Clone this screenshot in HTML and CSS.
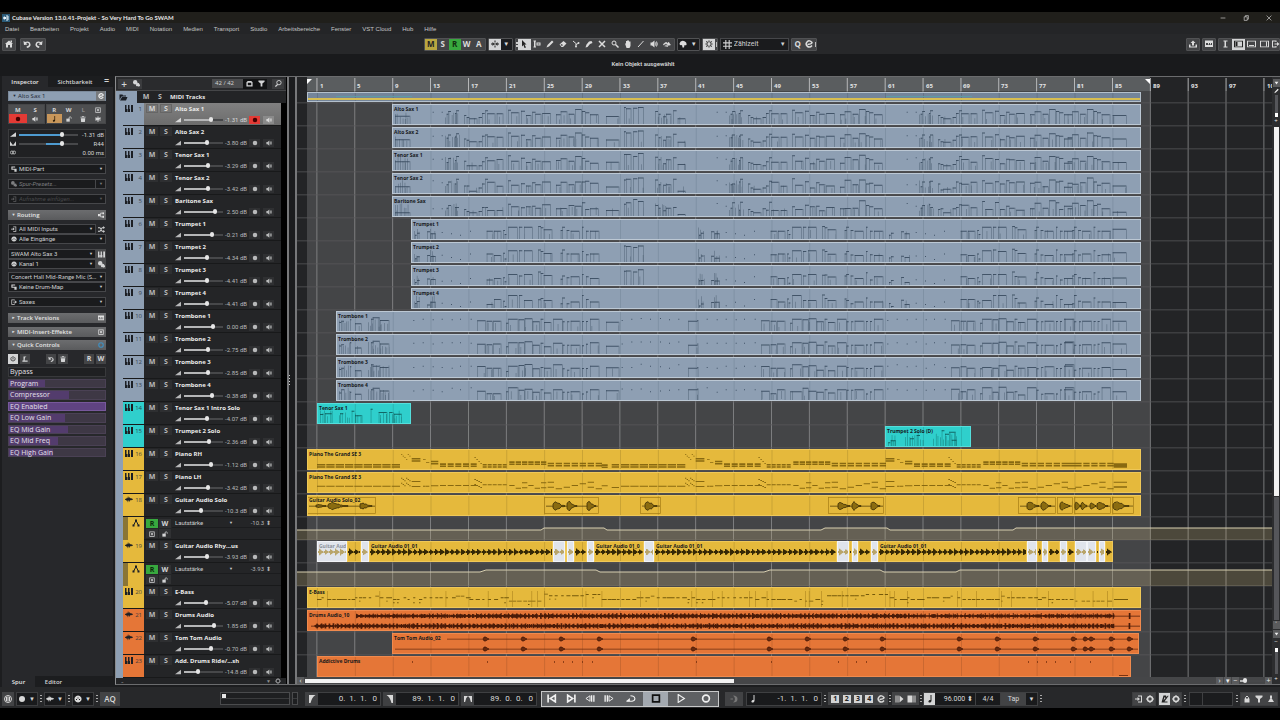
FILE: index.html
```html
<!DOCTYPE html>
<html lang="de">
<head>
<meta charset="utf-8">
<title>Cubase Version 13.0.41-Projekt - So Very Hard To Go SWAM</title>
<link rel="stylesheet" href="styles.css">
</head>
<body>
<svg class="defs" aria-hidden="true">
  <symbol id="i-keys" viewBox="0 0 16 14"><path d="M0 0h3v8h1v6H0zM6 0h3v8h1v6H5V8h1zM12 0h4v14h-4V8h0z"/></symbol>
  <symbol id="i-wave" viewBox="0 0 16 14"><path d="M0 6l3-1 1-2 1 2 1-5 2 5 1-3 2 3 1-1 1 1 3 1v1l-3 1-1 1-2-1-1 4-2-4-1 5-2-5-1 2-1-2-3-1z"/></symbol>
  <symbol id="i-auto" viewBox="0 0 16 16"><path d="M3 13L8 3l5 10" fill="none" stroke="currentColor" stroke-width="2"/><path d="M1 11h4v4H1zM6 1h4v4H6zM11 11h4v4h-4z"/></symbol>
  <symbol id="i-spk" viewBox="0 0 16 16"><path d="M1 5h3l5-4v14l-5-4H1z"/><path d="M11 5q2 3 0 6M13 3q3 5 0 10" fill="none" stroke="currentColor" stroke-width="2"/></symbol>
  <symbol id="i-dot" viewBox="0 0 16 16"><circle cx="8" cy="8" r="6"/></symbol>
  <symbol id="i-down" viewBox="0 0 16 16"><path d="M2 4h12L8 13z"/></symbol>
  <symbol id="i-level" viewBox="0 0 16 12"><path d="M0 12L16 0v12z"/></symbol>
  <symbol id="i-pan" viewBox="0 0 16 12"><path d="M0 0l7 9 2 0 7-9v12H0z"/></symbol>
  <symbol id="i-delay" viewBox="0 0 16 12"><circle cx="5" cy="6" r="4" fill="none" stroke="currentColor" stroke-width="2"/><circle cx="11" cy="6" r="4" fill="none" stroke="currentColor" stroke-width="2"/></symbol>
  <symbol id="i-home" viewBox="0 0 16 16"><path d="M8 1l8 7h-2v7h-4v-5H6v5H2V8H0z"/><path d="M11 1h3v4h-3z"/></symbol>
  <symbol id="i-undo" viewBox="0 0 16 16"><path d="M1 2l1 8 7-1-3-3q6-2 6 3 0 3-5 4l1 3q8-2 7-8Q13 1 4 4z"/></symbol>
  <symbol id="i-redo" viewBox="0 0 16 16"><path d="M15 2l-1 8-7-1 3-3Q4 4 4 9q0 3 5 4l-1 3Q0 14 1 8 3 1 12 4z"/></symbol>
  <symbol id="i-autoscroll" viewBox="0 0 16 16"><path d="M7 1h2v4H7zM7 11h2v4H7zM0 7h3V4l4 4-4 4V9H0zM16 7h-3V4L9 8l4 4V9h3zM6 7h4v2H6z"/></symbol>
  <symbol id="i-arrow" viewBox="0 0 16 16"><path d="M4 0l9 9H9l3 6-3 1-2-6-3 3z"/></symbol>
  <symbol id="i-range" viewBox="0 0 16 16"><path d="M1 1h5v2H5v10h1v2H1v-2h1V3H1zM7 5h8v6H7zM9 7v2h4V7z" fill-rule="evenodd"/></symbol>
  <symbol id="i-pen" viewBox="0 0 16 16"><path d="M1 15l2-5L12 1l3 3-9 9z"/></symbol>
  <symbol id="i-eraser" viewBox="0 0 16 16"><path d="M1 9l8-7 6 5-7 7H5zM5 8l-2 2 3 2 2-2z" fill-rule="evenodd"/></symbol>
  <symbol id="i-cut" viewBox="0 0 16 16"><path d="M2 2l7 6M14 6l-6 3M8 8v4" fill="none" stroke="currentColor" stroke-width="2"/><circle cx="8" cy="13" r="2"/><circle cx="13" cy="6" r="2"/></symbol>
  <symbol id="i-glue" viewBox="0 0 16 16"><path d="M1 15l2-6 5-6 5-1 2 4-5 2-5 6z"/></symbol>
  <symbol id="i-x" viewBox="0 0 16 16"><path d="M2 2l12 12M14 2L2 14" fill="none" stroke="currentColor" stroke-width="3"/></symbol>
  <symbol id="i-lens" viewBox="0 0 16 16"><circle cx="6" cy="6" r="4" fill="none" stroke="currentColor" stroke-width="2"/><path d="M9 9l6 6" stroke="currentColor" stroke-width="3"/></symbol>
  <symbol id="i-find" viewBox="0 0 16 16"><circle cx="9" cy="6" r="5" fill="none" stroke="currentColor" stroke-width="2"/><path d="M6 10l-5 5" stroke="currentColor" stroke-width="3"/></symbol>
  <symbol id="i-hand" viewBox="0 0 16 16"><path d="M2 7h2V2h2v4V1h2v5V1h2v5V3h3v9l-2 4H5z"/></symbol>
  <symbol id="i-line" viewBox="0 0 16 16"><path d="M2 14L13 2" stroke="currentColor" stroke-width="2"/></symbol>
  <symbol id="i-warp" viewBox="0 0 16 16"><path d="M1 8q6-6 8-1l2-3 4 6-7 1 1-2q-3-3-8 1zM3 12q5-3 7 2" stroke="currentColor" stroke-width="1"/></symbol>
  <symbol id="i-palette" viewBox="0 0 16 16"><path d="M1 7Q3 0 10 2q6 2 5 8-3 1-4 0l-1 5H7l-1-5Q1 12 1 7z"/></symbol>
  <symbol id="i-midi" viewBox="0 0 16 16"><path d="M8 1a7 7 0 1 0 .1 0zM4 8h2v2H4zM7 5h2v2H7zM10 8h2v2h-2z" fill-rule="evenodd"/></symbol>
  <symbol id="i-snap" viewBox="0 0 16 16"><path d="M7 1h2v4H7zM7 11h2v4H7zM1 7h4v2H1zM11 7h4v2h-4zM2 3l2-1 2 4-1 1zM14 3l-2-1-2 4 1 1zM2 13l2 1 2-4-1-1zM14 13l-2 1-2-4 1-1z"/></symbol>
  <symbol id="i-grid" viewBox="0 0 16 16"><path d="M5 0v16M11 0v16M0 5h16M0 11h16" fill="none" stroke="currentColor" stroke-width="2"/></symbol>
  <symbol id="i-share" viewBox="0 0 16 16"><path d="M8 1l5 5h-3v5H6V6H3zM0 9h3v4h10V9h3v6H0z"/></symbol>
  <symbol id="i-user" viewBox="0 0 16 16"><path d="M6 1h4v5H6zM7 6h2l5 8H2z"/></symbol>
  <symbol id="i-mixer" viewBox="0 0 16 16"><path d="M0 1h16v13H0zM2 6v6h12V6h-2v3h-2V6H8v3H6V6z" fill-rule="evenodd"/><path d="M2 10h12v2H2z"/></symbol>
  <symbol id="i-zone" viewBox="0 0 18 14"><path d="M0 0h18v14H0zM2 2v10h14V2z" fill-rule="evenodd"/></symbol>
  <symbol id="i-folder" viewBox="0 0 16 14"><path d="M0 1h6l1 2h6v2H4L0 12zM5 6h11l-3 7H1z"/></symbol>
  <symbol id="i-shapes" viewBox="0 0 16 16"><circle cx="5" cy="5" r="5"/><path d="M7 7h7v7H7z"/><circle cx="13" cy="12" r="3"/></symbol>
  <symbol id="i-lock" viewBox="0 0 16 16"><path d="M3 7h10v8H3z"/><path d="M5 8V5q3-6 6 0v3" fill="none" stroke="currentColor" stroke-width="2"/></symbol>
  <symbol id="i-ulock" viewBox="0 0 16 16"><path d="M1 7h9v8H1z"/><path d="M8 8V4q3-4 6 0v3" fill="none" stroke="currentColor" stroke-width="2"/></symbol>
  <symbol id="i-filter" viewBox="0 0 16 16"><path d="M1 1h14v3l-5 4v7H6V8L1 4z"/></symbol>
  <symbol id="i-cam" viewBox="0 0 16 16"><path d="M1 5l3-3h8l3 3v10H1zM4 6v6h8V6z" fill-rule="evenodd"/></symbol>
  <symbol id="i-gear" viewBox="0 0 16 16"><circle cx="8" cy="8" r="5" fill="none" stroke="currentColor" stroke-width="3"/><path d="M7 0h2v3H7zM7 13h2v3H7zM0 7h3v2H0zM13 7h3v2h-3z"/></symbol>
  <symbol id="i-note" viewBox="0 0 16 16"><path d="M9 0h2v12q-1 4-5 3-3-2 1-5h2z"/></symbol>
  <symbol id="i-bars" viewBox="0 0 16 16"><path d="M1 1h10v3H4v3h11v8H9v-5H1z"/></symbol>
  <symbol id="i-in" viewBox="0 0 16 16"><path d="M6 1h8v14H6v-2h6V3H6zM0 7h5V4l5 4-5 4V9H0z"/></symbol>
  <symbol id="i-out" viewBox="0 0 16 16"><path d="M1 1h9v3H8V3H3v10h5v-1h2v3H1zM6 7h5V4l5 4-5 4V9H6z"/></symbol>
  <symbol id="i-mix" viewBox="0 0 16 16"><path d="M0 3h5l5 8h2V9l4 3-4 4v-3H9L4 5H0zM0 11h4l5-8h3V0l4 4-4 3V5h-2l-5 8H0z"/></symbol>
  <symbol id="i-route" viewBox="0 0 16 16"><path d="M3 8h4V3h8M7 8v5h8" fill="none" stroke="currentColor" stroke-width="2"/><path d="M0 5h5v6H0zM12 1h4v5h-4zM12 10h4v5h-4z"/></symbol>
  <symbol id="i-power" viewBox="0 0 16 16"><path d="M4 3q-3 3-1 8 5 5 10 0 2-5-1-8" fill="none" stroke="currentColor" stroke-width="2"/><path d="M7 0h2v9H7z"/></symbol>
  <symbol id="i-learn" viewBox="0 0 16 16"><path d="M4 1h5l3 1-4 2-1 8h8v3H1v-3h3z"/></symbol>
  <symbol id="i-trash" viewBox="0 0 16 16"><path d="M1 2h5V0h4v2h5v2H1zM2 6h12l-1 10H3z"/></symbol>
  <symbol id="i-star" viewBox="0 0 16 16"><path d="M8 1v14M1 5l14 6M15 5L1 11" stroke="currentColor" stroke-width="3"/></symbol>
  <symbol id="i-box" viewBox="0 0 16 16"><path d="M1 1h14v14H1zM3 3v10h10V3z" fill-rule="evenodd"/><path d="M6 5h4v6H6z"/></symbol>
  <symbol id="i-e" viewBox="0 0 16 16"><path d="M14 11Q10 16 5 13 0 8 4 4q5-5 10 1 0 3-9 4" fill="none" stroke="currentColor" stroke-width="3"/></symbol>
  <symbol id="i-rings" viewBox="0 0 16 16"><circle cx="8" cy="8" r="7" fill="none" stroke="currentColor" stroke-width="2"/><path d="M5 4v8M8 3v10M11 4v8" stroke="currentColor" stroke-width="2"/></symbol>
  <symbol id="i-locl" viewBox="0 0 16 16"><path d="M2 0h13Q8 4 5 16H2z"/></symbol>
  <symbol id="i-locr" viewBox="0 0 16 16"><path d="M14 0H1q7 4 10 16h3z"/></symbol>
  <symbol id="i-loc2" viewBox="0 0 22 16"><path d="M0 0h11Q4 5 3 16H0zM22 0H11q7 5 8 16h3z"/></symbol>
  <symbol id="i-tostart" viewBox="0 0 18 16"><path d="M2 1v14M15 2L6 8l9 6z" fill="none" stroke="currentColor" stroke-width="3"/></symbol>
  <symbol id="i-toend" viewBox="0 0 18 16"><path d="M16 1v14M3 2l9 6-9 6z" fill="none" stroke="currentColor" stroke-width="3"/></symbol>
  <symbol id="i-rew" viewBox="0 0 22 16"><path d="M11 2L2 8l9 6z" fill="none" stroke="currentColor" stroke-width="2"/><path d="M13 1h3v14h-3zM18 1h3v14h-3z"/></symbol>
  <symbol id="i-fwd" viewBox="0 0 22 16"><path d="M11 2l9 6-9 6z" fill="none" stroke="currentColor" stroke-width="2"/><path d="M1 1h3v14H1zM6 1h3v14H6z"/></symbol>
  <symbol id="i-cycle" viewBox="0 0 18 16"><path d="M1 13h10q5-1 5-5-1-5-8-5" fill="none" stroke="currentColor" stroke-width="2"/><path d="M0 13l7-6v6z"/></symbol>
  <symbol id="i-stop" viewBox="0 0 16 16"><path d="M2 2h12v12H2z" fill="none" stroke="currentColor" stroke-width="3"/></symbol>
  <symbol id="i-play" viewBox="0 0 16 16"><path d="M3 1l11 7-11 7z" fill="none" stroke="currentColor" stroke-width="2"/></symbol>
  <symbol id="i-rec" viewBox="0 0 16 16"><circle cx="8" cy="8" r="6" fill="none" stroke="currentColor" stroke-width="3"/></symbol>
  <symbol id="i-moon" viewBox="0 0 16 16"><path d="M6 1q9 0 9 7t-9 7q4-3 4-7T6 1zM1 7h5v2H1z"/></symbol>
  <symbol id="i-metro" viewBox="0 0 16 16"><path d="M5 1h5l1 3 3-3 1 1-8 11h6v2H1zM7 4L5 11l4-5z" fill-rule="evenodd"/></symbol>
  <symbol id="i-logo" viewBox="0 0 16 16"><rect width="16" height="16" fill="#2a5a78"/><path d="M2 8l3-5v3h3v4H5v3zM9 2h2v3h3v2h-3v2h3v2h-3v3H9z" fill="#e8f2f8"/></symbol>
</svg>

<div class="app">
  <header class="titlebar">
    <svg class="logo"><use href="#i-logo"/></svg>
    <span class="title">Cubase Version 13.0.41-Projekt - So Very Hard To Go SWAM</span>
    <button class="win" aria-label="Minimieren"><svg viewBox="0 0 10 10"><path d="M1 5h8" stroke="currentColor"/></svg></button>
    <button class="win" aria-label="Verkleinern"><svg viewBox="0 0 10 10"><path d="M2 3h5v6H2zM4 3V1h5v6H7" fill="none" stroke="currentColor"/></svg></button>
    <button class="win" aria-label="Schließen"><svg viewBox="0 0 10 10"><path d="M1 1l8 8M9 1L1 9" stroke="currentColor"/></svg></button>
  </header>
  <nav class="menu">
    <a href="#">Datei</a><a href="#">Bearbeiten</a><a href="#">Projekt</a><a href="#">Audio</a><a href="#">MIDI</a><a href="#">Notation</a><a href="#">Medien</a><a href="#">Transport</a><a href="#">Studio</a><a href="#">Arbeitsbereiche</a><a href="#">Fenster</a><a href="#">VST Cloud</a><a href="#">Hub</a><a href="#">Hilfe</a>
  </nav>

  <div class="toolbar">
    <div class="tgroup">
      <div class="grp"><button aria-label="Hub"><svg><use href="#i-home"/></svg></button></div>
      <div class="grp"><button aria-label="Rückgängig"><svg><use href="#i-undo"/></svg></button><button aria-label="Wiederherstellen"><svg><use href="#i-redo"/></svg></button></div>
    </div>
    <div class="tgroup tight">
      <div class="grp letters"><button class="mute">M</button><button>S</button><button class="read">R</button><button>W</button><button>A</button></div>
      <div class="grp dark"><button class="lit" aria-label="Auto-Scroll"><svg><use href="#i-autoscroll"/></svg></button><button class="arr" aria-label="Optionen">▼</button></div>
      <div class="grp tools"><i class="grip"></i><button class="lit" aria-label="Auswahl"><svg><use href="#i-arrow"/></svg></button><button aria-label="Bereich"><svg><use href="#i-range"/></svg></button><button aria-label="Stift"><svg><use href="#i-pen"/></svg></button><button aria-label="Löschen"><svg><use href="#i-eraser"/></svg></button><button aria-label="Trennen"><svg><use href="#i-cut"/></svg></button><button aria-label="Kleben"><svg><use href="#i-glue"/></svg></button><button aria-label="Stummschalten"><svg><use href="#i-x"/></svg></button><button aria-label="Zoom"><svg><use href="#i-lens"/></svg></button><button aria-label="Comp"><svg><use href="#i-hand"/></svg></button><button aria-label="Linie"><svg><use href="#i-line"/></svg></button><button aria-label="Wiedergabe"><svg><use href="#i-spk"/></svg></button><button aria-label="Warp"><svg><use href="#i-warp"/></svg></button></div>
      <div class="grp dark pal"><button aria-label="Farbe"><svg><use href="#i-palette"/></svg></button><button class="arr" aria-label="Farbmenü">▼</button></div>
      <div class="grp"><button class="lit" aria-label="Raster"><svg><use href="#i-snap"/></svg></button><i class="bar"></i></div>
      <label class="drop beat"><svg><use href="#i-grid"/></svg><select aria-label="Rastertyp"><option>Zählzeit</option></select></label>
      <div class="grp"><button>Q</button><button class="thin" aria-label="Quantisierungsfeld"><svg><use href="#i-e"/></svg></button><i class="bar"></i></div>
    </div>
    <div class="tgroup end">
      <div class="grp"><button aria-label="Export"><svg><use href="#i-share"/></svg></button></div>
      <div class="grp"><button aria-label="MixConsole"><svg><use href="#i-mixer"/></svg></button></div>
      <div class="grp zones"><button aria-label="Info"><svg viewBox="0 0 18 14"><path d="M5 0h8v2h-3v10h3v2H5v-2h2V2H5z"/></svg></button><button class="lit" aria-label="Linke Zone"><svg viewBox="0 0 18 14"><use href="#i-zone"/><path d="M3 3h4v8H3z"/></svg></button><button aria-label="Untere Zone"><svg viewBox="0 0 18 14"><use href="#i-zone"/><path d="M4 9h10v2H4z"/></svg></button><button aria-label="Rechte Zone"><svg viewBox="0 0 18 14"><use href="#i-zone"/><path d="M12 2h2v10h-2z"/></svg></button><button class="arr" aria-label="Einrichten"><svg><use href="#i-out"/></svg></button></div>
    </div>
  </div>

  <div class="infoline">Kein Objekt ausgewählt</div>

  <main class="work">
    <aside class="inspector">
      <div class="tabs"><button class="on">Inspector</button><button>Sichtbarkeit</button><span class="eq">=</span></div>
      <div class="panel">
        <div class="head track"><span class="tri">▼</span><span class="grow">Alto Sax 1</span><button class="edit" aria-label="Bearbeiten"><svg><use href="#i-e"/></svg></button></div>
        <div class="pads">
          <div class="pad two"><button>M</button><button>S</button><button class="red" aria-label="Aufnahme"><svg><use href="#i-dot"/></svg></button><button aria-label="Monitor"><svg><use href="#i-spk"/></svg></button></div>
          <div class="pad four"><button>R</button><button>W</button><button class="off">L</button><button aria-label="Lanes"><svg><use href="#i-box"/></svg></button><button class="tan" aria-label="Zeitbasis"><svg><use href="#i-note"/></svg></button><button aria-label="Sperren"><svg><use href="#i-ulock"/></svg></button><button aria-label="Spuren"><svg><use href="#i-trash"/></svg></button><button aria-label="Einfrieren"><svg><use href="#i-star"/></svg></button></div>
        </div>
        <div class="faders">
          <label><svg><use href="#i-level"/></svg><input type="range" class="rng blue" value="75" style="--v:75%"><output>-1.31 dB</output></label>
          <label><svg><use href="#i-pan"/></svg><input type="range" class="rng pan" value="74" style="--v:74%"><output>R44</output></label>
          <label><svg><use href="#i-delay"/></svg><span></span><output>0.00 ms</output></label>
        </div>
        <label class="drop"><svg><use href="#i-bars"/></svg><select><option>MIDI-Part</option></select></label>
        <label class="drop dim cut"><svg><use href="#i-shapes"/></svg><select><option>Spur-Presets...</option></select></label>
        <label class="drop dim off"><svg><use href="#i-in"/></svg><select disabled><option>Aufnahme einfügen...</option></select></label>
        <div class="head"><span class="tri">▼</span><span class="grow">Routing</span><svg><use href="#i-route"/></svg></div>
        <div class="stack s1">
          <div class="pair"><label class="drop"><svg><use href="#i-in"/></svg><select><option>All MIDI Inputs</option></select></label><button class="sq" aria-label="Mischen"><svg><use href="#i-mix"/></svg></button></div>
          <label class="drop"><svg><use href="#i-midi"/></svg><select><option>Alle Eingänge</option></select></label>
        </div>
        <div class="stack s2">
          <div class="pair"><label class="drop"><select aria-label="Ausgang"><option>SWAM Alto Sax 3</option></select></label><button class="sq fill" aria-label="Instrument"><svg><use href="#i-keys"/></svg></button></div>
          <div class="pair"><label class="drop"><svg><use href="#i-midi"/></svg><select><option>Kanal 1</option></select></label><button class="sq fill" aria-label="Kanal"><svg><use href="#i-shapes"/></svg></button></div>
        </div>
        <div class="stack s3">
          <label class="drop long"><select aria-label="Programm"><option>Concert Hall Mid-Range Mic (Sym...</option></select></label>
          <label class="drop"><svg><use href="#i-bars"/></svg><select><option>Keine Drum-Map</option></select></label>
        </div>
        <label class="drop last"><svg><use href="#i-out"/></svg><select><option>Saxes</option></select></label>
        <div class="head"><span class="tri">►</span><span class="grow">Track Versions</span><svg><use href="#i-mixer"/></svg></div>
        <div class="head near"><span class="tri">►</span><span class="grow">MIDI-Insert-Effekte</span><svg><use href="#i-box"/></svg></div>
        <div class="head near"><span class="tri">▼</span><span class="grow">Quick Controls</span><svg class="cy"><use href="#i-rec"/></svg></div>
        <div class="qcbar"><button class="lit" aria-label="An"><svg><use href="#i-power"/></svg></button><button aria-label="Lernen"><svg><use href="#i-learn"/></svg></button><i></i><button aria-label="Zurück"><svg><use href="#i-undo"/></svg></button><button aria-label="Löschen"><svg><use href="#i-trash"/></svg></button><i></i><button class="rw">R</button><button class="rw">W</button></div>
        <ul class="qc">
          <li class="none" style="--w:0%">Bypass</li><li style="--w:37%">Program</li><li style="--w:63%">Compressor</li><li class="all" style="--w:100%">EQ Enabled</li><li style="--w:58%">EQ Low Gain</li><li style="--w:61%">EQ Mid Gain</li><li style="--w:51%">EQ Mid Freq</li><li style="--w:46%">EQ High Gain</li>
        </ul>
      </div>
      <div class="tabs foot"><button class="on">Spur</button><button>Editor</button></div>
    </aside>

    <section class="project">
      <div class="tracklist">
        <div class="tlhead"><button aria-label="Spur hinzufügen">+</button><button aria-label="Preset"><svg><use href="#i-shapes"/></svg></button><span class="count">42 / 42</span><button class="k" aria-label="Agenten"><svg><use href="#i-cam"/></svg></button><button class="k" aria-label="Filter"><svg><use href="#i-filter"/></svg></button><button class="find" aria-label="Suchen"><svg><use href="#i-find"/></svg></button></div>
        <div class="folder"><svg><use href="#i-folder"/></svg><span class="ms"><button>M</button><button>S</button></span><b>MIDI Tracks</b></div>
        <div class="tracks" id="tracks"></div>
        <div class="tlfoot"><span>-</span><span>▼</span><svg><use href="#i-gear"/></svg></div>
      </div>
      <div class="split"><i></i></div>
      <div class="arrange">
        <div class="canvas" id="canvas"></div>
        <div class="hscroll"><span class="cell">‹</span><span class="thumb"></span><span class="rest"></span><span class="cell">›</span><span class="cell">▾</span><span class="cell">−</span><input type="range" class="rng mini" aria-label="Zoom horizontal" value="15" style="--v:15%"><span class="cell">+</span></div>
      </div>
      <div class="vscroll"><svg class="box"><use href="#i-down"/></svg><svg><use href="#i-pen"/></svg><i class="track short"></i><span>+</span><i class="track white"></i><i class="track fill"></i><span class="cell">˅</span><svg class="box"><use href="#i-down"/></svg><span>−</span><i class="track zoom"></i><span>+</span></div>
    </section>
  </main>

  <footer class="transport">
    <button class="t1" aria-label="Constrain"><svg><use href="#i-rings"/></svg></button>
    <div class="tg"><button aria-label="Aufnahmemodus"><svg><use href="#i-dot"/></svg></button><button class="arr" aria-label="Menü">▼</button></div><i class="dots"></i>
    <div class="tg"><button aria-label="Audio"><svg><use href="#i-wave"/></svg></button><button class="arr" aria-label="Menü">▼</button></div><i class="dots"></i>
    <div class="tg"><button aria-label="MIDI"><svg><use href="#i-midi"/></svg></button><button class="arr" aria-label="Menü">▼</button></div><i class="dots"></i>
    <button class="t1 aq">AQ</button>
    <div class="meter"><i></i></div><div class="meter small"></div>
    <div class="loc"><svg><use href="#i-locl"/></svg><span>0.&nbsp; 1.&nbsp; 1.&nbsp; &nbsp;0</span></div>
    <div class="loc"><svg><use href="#i-locr"/></svg><span>89.&nbsp; 1.&nbsp; 1.&nbsp; &nbsp;0</span></div>
    <div class="loc last"><svg><use href="#i-loc2"/></svg><span>89.&nbsp; 0.&nbsp; 0.&nbsp; &nbsp;0</span></div>
    <div class="play"><button aria-label="Anfang"><svg><use href="#i-tostart"/></svg></button><button aria-label="Ende"><svg><use href="#i-toend"/></svg></button><button aria-label="Zurückspulen"><svg><use href="#i-rew"/></svg></button><button aria-label="Vorspulen"><svg><use href="#i-fwd"/></svg></button><button class="w" aria-label="Cycle"><svg><use href="#i-cycle"/></svg></button><button class="stop" aria-label="Stopp"><svg><use href="#i-stop"/></svg></button><button class="w" aria-label="Start"><svg><use href="#i-play"/></svg></button><button class="w" aria-label="Aufnahme"><svg><use href="#i-rec"/></svg></button></div>
    <button class="t1 moon" aria-label="Pre-Roll"><svg><use href="#i-moon"/></svg></button>
    <div class="loc pos"><svg><use href="#i-note"/></svg><span>-1.&nbsp; 1.&nbsp; 1.&nbsp; &nbsp;0</span></div><i class="dots"></i>
    <div class="marks"><b>1</b><b>2</b><b>3</b><b>4</b><svg><use href="#i-e"/></svg></div><i class="dots"></i>
    <div class="marks roll"><svg viewBox="0 0 16 16"><path d="M0 1h2v14H0zM4 1h2v14H4zM8 1l8 7-8 7z"/></svg><svg viewBox="0 0 16 16"><path d="M0 1h9v14H0zM10 1h2v14h-2zM14 1h2v14h-2z"/></svg></div><i class="dots"></i>
    <div class="tempo"><button class="lit" aria-label="Tempo"><svg><use href="#i-note"/></svg></button><span class="bpm">96.000 <small>⬍</small></span><span>4/4</span><button class="tap">Tap</button><button class="arr" aria-label="Menü">▼</button></div><i class="dots"></i>
    <span class="gap"></span>
    <div class="tg grey"><button aria-label="Punch"><svg><use href="#i-in"/></svg></button><button aria-label="Einstellungen"><svg><use href="#i-gear"/></svg></button></div>
    <div class="tg grey"><button class="lit" aria-label="Metronom"><svg><use href="#i-metro"/></svg></button><button aria-label="Einstellungen"><svg><use href="#i-gear"/></svg></button></div><i class="dots"></i>
    <div class="vu"></div><i class="dots"></i>
    <div class="tg grey"><button aria-label="Sperren"><svg><use href="#i-lock"/></svg></button><button aria-label="Filter"><svg><use href="#i-filter"/></svg></button><button aria-label="Nutzer"><svg><use href="#i-user"/></svg></button></div>
  </footer>
</div>
<script src="app.js"></script>
</body>
</html>
```

FILE: styles.css
```css
* { box-sizing: border-box; }
html, body { height: 100%; }
body {
  margin: 0;
  background: #000;
  color: #d4d5d6;
  font: 6px/8px "Open Sans", "Noto Sans", sans-serif;
  overflow: hidden;
}
button, select, input { font: inherit; color: inherit; border: 0; padding: 0; margin: 0; background: none; }
button { display: flex; align-items: center; justify-content: center; line-height: 8px; }
svg { fill: currentColor; flex: none; width: 8px; height: 8px; }
.defs { position: absolute; width: 0; height: 0; }
a { color: inherit; text-decoration: none; }
.app { display: flex; flex-direction: column; height: 100vh; padding: 12px 0; }

.titlebar { display: flex; align-items: center; height: 11px; background: #201f1b; padding-left: 2px; color: #e6e6e6; }
.logo { width: 8px; height: 8px; margin-right: 2px; }
.title { flex: 1; font: bold 6px/10px Lato, sans-serif; }
.win { width: 23px; }
.win svg { width: 6px; height: 6px; }
.menu { display: flex; gap: 11px; height: 11px; align-items: center; padding: 0 5px; background: #242527; font-family: "Liberation Sans", sans-serif; color: #c4c5c6; }
.toolbar { display: grid; grid-template-columns: 33% auto 1fr; height: 20px; background: #27282a; align-items: center; padding-left: 2px; }
.tgroup { display: flex; gap: 4px; align-items: center; }
.tgroup.tight { gap: 2px; }
.tgroup.end { justify-content: flex-end; gap: 2px; }
.grp { display: flex; height: 13px; background: #434446; border: 1px solid #515254; border-radius: 1px; align-items: stretch; color: #dcdcdc; }
.grp button { width: 12px; font: bold 8px/10px "Open Sans", sans-serif; }
.grp.tools button { width: 13px; height: 11px; }
.grp.dark { background: #1b1c1e; }
.grp .arr, .tg .arr, .tempo .arr { font-size: 6px; width: 11px; }
.grp.pal button { width: 11px; }
.grp.pal .arr { width: 10px; }
.grp .thin { width: 10px; }
.grp .mute { background: #b9a740; color: #222; }
.grp .read { background: #38a83e; color: #12300f; }
.grp .lit, .lit { background: #d3d4d5; color: #222; }
.grip { width: 2px; align-self: center; height: 5px; background: repeating-linear-gradient(#ccc 0 2px, transparent 2px 3px); }
.bar { width: 1px; height: 5px; background: #bbb; align-self: center; margin-left: 1px; }
.drop { display: flex; align-items: center; height: 10px; min-width: 0; background: #1a1b1d; border: 1px solid #46474a; padding: 0 2px; gap: 2px; position: relative; color: #cfd0d1; font-family: Roboto, sans-serif; }
.drop svg { width: 6px; height: 6px; }
.drop select { appearance: none; flex: 1; min-width: 0; width: 100%; height: 8px; line-height: 8px; padding-right: 5px; text-overflow: ellipsis; outline: none; }
.drop::after { content: "▼"; position: absolute; right: 2px; font-size: 4px; }
.drop.cut { background: linear-gradient(90deg, transparent calc(100% - 10px), #46474a calc(100% - 10px) calc(100% - 9px), transparent calc(100% - 9px)) #1a1b1d; }
.drop.long { font-family: Lato, sans-serif; }
.beat { width: 69px; height: 13px; font-size: 7px; }
.beat svg { width: 9px; height: 9px; }
.beat::after { font-size: 6px; }
.zones svg { width: 9px; height: 8px; }
.zones button { width: 13px; }
.grp.zones .arr { width: 8px; }
.infoline { height: 22px; background: #191a1c; text-align: center; line-height: 20px; padding-left: 6px; font-family: Roboto, sans-serif; font-weight: 600; }

.work { display: flex; flex: 1; min-height: 0; background: #1c1d1f; }
.inspector { width: 113px; flex: none; display: flex; flex-direction: column; margin-right: 2px; }
.tabs { display: flex; height: 11px; padding-left: 2px; font-weight: 600; font-size: 6px; }
.tabs button { width: 46px; }
.tabs button + button { width: 54px; }
.tabs .on { background: #27282b; color: #e6e6e6; }
.tabs .eq { font-size: 9px; margin-left: 2px; line-height: 10px; }
.tabs.foot button { width: 37px; }
.tabs.foot .on { width: 33px; }
.panel { flex: 1; margin-left: 2px; background: #27282b; padding: 4px 7px 0 6px; display: flex; flex-direction: column; }
.head { display: flex; align-items: center; height: 10px; background: linear-gradient(#6c6d6f, #5a5b5d); color: #e3e3e3; font-weight: 600; padding: 0 2px; margin: 6px 0 4px; flex: none; }
.head.near { margin: 0 0 3px; }
.head svg { width: 6px; height: 6px; }
.head .cy { color: #3f8fc0; }
.head .tri { font-size: 4px; width: 7px; text-align: center; }
.head .grow { flex: 1; }
.head.track { background: #8e9fb3; color: #1c2632; margin: 0 0 3px; padding-right: 0; border: 1px solid #7c8b9c; font-weight: 400; }
.edit { width: 9px; height: 10px; background: #777a7d; color: #eee; }
.pads { display: flex; gap: 1px; margin-bottom: 5px; }
.pad { display: grid; background: #4d4e50; grid-auto-rows: 9px; font-weight: 700; border: 1px solid #454648; }
.pad.two { grid-template-columns: 1fr 1fr; width: 37px; }
.pad.four { grid-template-columns: repeat(4, 1fr); flex: 1; }
.pad svg { width: 6px; height: 6px; }
.pad .red { background: #e33a35; color: #400; }
.pad .tan { background: #c8965a; color: #2a1c08; }
.pad .off { color: #888; }
.faders { border: 1px solid #3c3d3f; background: #202123; padding: 0 1px; margin-bottom: 6px; font-family: Roboto, sans-serif; }
.faders label { display: grid; grid-template-columns: 7px 1fr 24px; gap: 2px; align-items: center; height: 9px; }
.faders svg { width: 6px; height: 5px; }
.faders output { text-align: right; white-space: nowrap; }
.rng { appearance: none; height: 5px; width: 100%; min-width: 0; outline: none; display: block; background: linear-gradient(90deg, #b5b6b7 var(--v), #47484a var(--v)) center / 100% 2px no-repeat; }
.rng::-webkit-slider-thumb { appearance: none; width: 4px; height: 5px; border-radius: 2px; background: #e6e6e6; }
.rng.blue { background-image: linear-gradient(90deg, #4e9bd0 var(--v), #47484a var(--v)); }
.rng.pan { background-image: linear-gradient(90deg, #47484a 46%, #4e9bd0 46% var(--v), #47484a var(--v)); }
.panel > .drop { margin-bottom: 5px; flex: none; }
.panel > .drop.dim { font-style: italic; color: #7d7e80; }
.panel > .drop.off { color: #5c5d5f; margin-bottom: 0; }
.panel > .drop.last { margin-bottom: 0; }
.stack { display: flex; flex-direction: column; margin-bottom: 5px; flex: none; }
.stack.s2 { margin-bottom: 3px; }
.pair { display: flex; }
.pair .drop { flex: 1; }
.sq { width: 10px; height: 10px; }
.sq svg { width: 7px; height: 7px; }
.sq.fill { background: #48494b; }
.qcbar { display: flex; height: 10px; gap: 2px; margin: 1px 0 3px; flex: none; }
.qcbar i { flex: 1; }
.qcbar button { width: 10px; background: #434446; font-weight: 700; font-size: 7px; }
.qcbar .lit { background: #d3d4d5; }
.qcbar svg { width: 6px; height: 6px; }
.qc { list-style: none; margin: 0; padding: 0; display: grid; gap: 2px; height: 90px; grid-template-rows: repeat(8, minmax(0, 1fr)); flex: none; }
.qc li { background: linear-gradient(90deg, #533c6d var(--w), #3e3845 var(--w)); border: 1px solid #4a4154; padding-left: 1px; font: 7px/8px "Open Sans", sans-serif; color: #e4e0ea; }
.qc .none { background: #1f2022; border-color: #38393b; }
.qc .all { background: #5f4382; border-color: #77589b; }

.project { flex: 1; min-width: 0; display: flex; border: solid #6b6c6e; border-width: 1px 0 1px 1px; border-left-color: #8b8c8e; margin-bottom: 2px; background: #232426; }
.tracklist { width: 171px; flex: none; display: flex; flex-direction: column; border-right: 1px solid #000; }
.tlhead { display: flex; height: 14px; flex: none; background: #2a2b2d; align-items: center; padding: 0 2px; border-bottom: 1px solid #454648; }
.tlhead button { width: 12px; height: 10px; background: #3b3c3e; font-size: 10px; font-weight: 600; }
.tlhead svg { width: 7px; height: 7px; }
.tlhead .count { width: 31px; height: 9px; background: #4a4b4d; margin-left: auto; padding-left: 3px; }
.tlhead .k { background: #121314; }
.tlhead .find { margin-left: 5px; }
.folder { display: flex; height: 12px; flex: none; align-items: center; background: linear-gradient(90deg, #8e9fb3 21px, #232426 21px); padding-left: 3px; }
.folder svg { color: #1a1e24; width: 9px; height: 7px; }
.folder b { margin-left: 4px; color: #e6e6e6; }
.folder .ms { margin-left: 12px; }
.ms { display: flex; gap: 2px; height: 9px; width: 26px; }
.ms button { width: 12px; font-weight: 700; font-size: 7px; color: #b9babb; }
.tracks { flex: none; border-left: 7px solid #8e9fb3; border-right: 5px solid #000; }
.trk { display: grid; grid-template-columns: 21px 28px 1fr; height: 23px; border-bottom: 1px solid #18191a; background: #242527; }
.trk.sel { background: linear-gradient(#818181, #6c6c6c); }
.tag { display: flex; justify-content: space-between; align-items: flex-start; padding: 2px 2px; font-size: 6px; color: #2b3340; }
.blue-t .tag { background: #8e9fb3; } .teal-t .tag { background: #2fcfcc; }
.gold-t .tag { background: #e5b93c; } .orng-t .tag { background: #e57637; }
.tag svg { width: 8px; height: 7px; color: #1c1f24; }
.tag span { opacity: .85; }
.trk > .ms { margin: 1px 0 0 2px; }
.trk > .ms button { background: #2e2f31; }
.trk.sel > .ms button { background: #777; color: #d6d6d6; border: 1px solid #666; }
.body { padding-left: 3px; min-width: 0; }
.name { display: block; font: bold 6px/12px "Open Sans", sans-serif; color: #ececec; height: 12px; white-space: nowrap; }
.ctl { display: grid; grid-template-columns: 7px 39px 22px 12px 12px; gap: 2px; align-items: center; height: 9px; color: #b8b9ba; font-family: Roboto, sans-serif; }
.ctl svg { width: 6px; height: 6px; }
.ctl output { text-align: right; white-space: nowrap; }
.ctl button { height: 8px; background: #2f3032; width: 11px; }
.sel .ctl button { background: #8a8a8a; }
.sel .ctl .r { background: #e33a35; color: #400; }
.sel .ctl { color: #d8d8d8; }
.aut .tag { border-left: 5px solid #8a7535; justify-content: center; }
.aut .tag svg { width: 8px; height: 8px; }
.rwbox { display: grid; grid-template-columns: 12px 12px; grid-auto-rows: 9px; gap: 1px; padding: 2px; }
.rwbox .g { background: #38a83e; color: #0d2a0c; }
.rwbox button { background: #303133; font-weight: 700; font-size: 7px; }
.rwbox svg { width: 6px; height: 6px; }
.par { display: grid; grid-template-columns: 60px 1fr 8px; padding: 1px 9px 0 3px; height: 11px; color: #b5b6b7; border-bottom: 1px solid #1b1c1e; align-items: center; font-family: Roboto, sans-serif; }
.par .drop { background: none; border: 0; padding: 0; }
.par output { text-align: right; }
.par span { text-align: center; }
.tlfoot { display: flex; justify-content: flex-end; gap: 4px; flex: 1; min-height: 0; padding: 0 5px; align-items: center; font-size: 5px; color: #8d8e90; }
.tlfoot span:first-child { margin-right: auto; font-size: 8px; }
.tlfoot svg { width: 6px; height: 6px; }
.split { width: 10px; flex: none; background: #1b1c1e; border-left: 2px solid #77787a; border-right: 2px solid #77787a; display: flex; align-items: center; }
.split i { height: 12px; width: 1px; background: repeating-linear-gradient(#ccc 0 1px, transparent 1px 3px); }
.arrange { flex: 1; min-width: 0; display: flex; flex-direction: column; }
.canvas { position: relative; flex: 1; min-height: 0; overflow: hidden; background: #232426; }
.canvas > svg { position: absolute; left: 0; top: 0; width: 100%; height: 100%; }
.ruler { position: relative; height: 14px; }
.ruler span { position: absolute; top: 5px; font: bold 6px/8px "Open Sans", sans-serif; color: #e2e3e4; }
.lane { position: relative; height: 23px; }
.lane.first { height: 12px; }
.clip { position: absolute; top: 1px; bottom: 1px; overflow: hidden; border: 1px solid; color: #17191c; }
.clip svg { position: absolute; left: 0; top: 0; width: 100%; height: 100%; }
.clip span { position: absolute; left: 1px; top: 0; font: bold 5px/8px "Open Sans", sans-serif; white-space: nowrap; }
.clip.blue { background: #8e9fb3; border-color: #bcc8d4; }
.clip.teal { background: #2fcfcc; border-color: #55dedb; }
.clip.gold { background: #e5b93c; border-color: #efc858; }
.clip.orange { background: #e57637; border-color: #f08a4e; }
.clip.white { background: #e0e4ec; border-color: #f2f4f8; color: #8b909a; }
.clip.sum { background: #74859a; border-color: #b4c0cc; }
.hscroll { display: flex; height: 7px; background: #454648; align-items: center; flex: none; font-size: 7px; gap: 1px; }
.hscroll .thumb { width: 44%; height: 4px; background: #f2f2f2; }
.hscroll .rest { flex: 1; }
.cell { width: 7px; text-align: center; line-height: 7px; background: #5a5b5d; color: #eee; }
.rng.mini { width: 24px; }
.vscroll { width: 8px; flex: none; background: #2c2d2f; display: flex; flex-direction: column; align-items: center; font-size: 6px; gap: 1px; padding-top: 2px; color: #eee; }
.vscroll svg { width: 5px; height: 6px; }
.vscroll .box { width: 7px; height: 8px; padding: 1px; background: #5a5b5d; }
.vscroll span { line-height: 7px; height: 8px; flex: none; }
.vscroll .track { width: 3px; background: #55565a; }
.vscroll .short { height: 22px; background: linear-gradient(#55565a 18px, #fff 18px); }
.vscroll .white { width: 5px; flex: 371; background: #f2f2f2; }
.vscroll .fill { width: 5px; flex: 124; }
.vscroll .zoom { height: 26px; background: linear-gradient(#fff 4px, #55565a 4px); margin-bottom: 1px; }

.transport { display: flex; height: 21px; background: #27282a; align-items: center; padding: 2px 2px 0; gap: 2px; color: #d8d8d8; }
.transport .t1 { width: 12px; height: 14px; background: #424345; }
.transport .aq { width: 20px; font: 600 8px/10px "Open Sans", sans-serif; }
.transport .moon { width: 18px; margin: 0 1px 0 4px; color: #777; }
.tg { display: flex; height: 14px; background: #191a1c; border: 1px solid #3c3d3f; }
.tg button, .tg .arr { width: 10px; }
.tg.grey { background: #434446; }
.tg.grey button { width: 11px; }
.tg.grey:last-child button { width: 12px; }
.tg .lit { background: #d3d4d5; }
.dots { width: 2px; height: 8px; background: repeating-linear-gradient(#aaa 0 1px, transparent 1px 3px); }
.marks + .dots { margin: 0 -1px; }
.meter { width: 70px; height: 13px; border: 1px solid #4a4b4d; background: linear-gradient(#1e1f21 45%, #3a3b3d 45% 55%, #1e1f21 55%); margin-left: 98px; padding: 1px; }
.meter i { display: block; width: 4px; height: 4px; background: #e6e6e6; }
.meter.small { width: 6px; margin: 0 5px 0 0; }
.loc { display: flex; width: 76px; height: 14px; border: 1px solid #3f4042; background: #191a1c; align-items: center; }
.loc svg { width: 12px; height: 12px; padding: 2px; background: #3f4042; }
.loc span { flex: 1; text-align: right; padding-right: 3px; font: 8px/12px Roboto, sans-serif; white-space: nowrap; }
.pos svg { background: none; }
.play { display: flex; height: 16px; background: #5e6063; border: 1px solid #c7c8c9; color: #f0f0f0; flex: none; margin-left: 2px; }
.play button { width: 19px; }
.play .w { width: 25px; }
.play svg { width: 10px; height: 9px; }
.play .stop { width: 25px; background: #a3a9b0; color: #111; }
.marks { display: flex; height: 13px; width: 60px; background: #424345; align-items: center; justify-content: space-evenly; }
.marks b { background: #d3d4d5; color: #222; font-size: 7px; width: 8px; text-align: center; }
.marks.roll { width: 27px; }
.marks.roll svg { width: 9px; }
.tempo { display: flex; height: 14px; border: 1px solid #3f4042; background: #191a1c; font: 7px/12px Roboto, sans-serif; align-items: center; }
.tempo > * { height: 12px; }
.tempo span { width: 25px; text-align: center; border-right: 1px solid #3f4042; }
.tempo .lit { width: 11px; }
.tempo .bpm { width: 41px; text-align: right; padding-right: 2px; }
.tempo small { font-size: 7px; }
.tap { width: 25px; background: #424345; }
.gap { flex: 1; }
.vu { width: 44px; height: 14px; border: 1px solid #3f4042; background: linear-gradient(90deg, #1b1c1e 12px, #3f4042 12px 13px, #1b1c1e 13px); margin: 0 1px; }
```

FILE: app.js
```js
/* Timeline geometry: pixels per bar and x of bar 1 inside the canvas. */
const BAR = 9.47, X1 = 20, END = 853, START = 10;
const barX = b => X1 + (b - 1) * BAR;
const canvas = document.getElementById('canvas');

/* name, colour, volume text, fader %, icon */
const T = [
  ['Alto Sax 1', 'blue', '-1.31', 70], ['Alto Sax 2', 'blue', '-3.80', 61], ['Tenor Sax 1', 'blue', '-3.29', 63],
  ['Tenor Sax 2', 'blue', '-3.42', 62], ['Baritone Sax', 'blue', '2.50', 83], ['Trumpet 1', 'blue', '-0.21', 75],
  ['Trumpet 2', 'blue', '-4.34', 59], ['Trumpet 3', 'blue', '-4.41', 59], ['Trumpet 4', 'blue', '-4.41', 59],
  ['Trombone 1', 'blue', '0.00', 76], ['Trombone 2', 'blue', '-2.75', 64], ['Trombone 3', 'blue', '-2.85', 64],
  ['Trombone 4', 'blue', '-0.38', 74], ['Tenor Sax 1 Intro Solo', 'teal', '-4.07', 60], ['Trumpet 2 Solo', 'teal', '-2.36', 66],
  ['Piano RH', 'gold', '-1.12', 71], ['Piano LH', 'gold', '-3.42', 62], ['Guitar Audio Solo', 'gold', '-10.3', 43, 1],
  ['auto', 'gold', '-10.3'], ['Guitar Audio Rhy...us', 'gold', '-3.93', 60, 1], ['auto', 'gold', '-3.93'],
  ['E-Bass', 'gold', '-5.07', 57], ['Drums Audio', 'orng', '1.85', 80, 1], ['Tom Tom Audio', 'orng', '-0.70', 72, 1],
  ['Add. Drums Ride/...sh', 'orng', '-14.8', 34]
];
const ico = id => `<svg><use href="#i-${id}"/></svg>`;
let n = 0;
document.getElementById('tracks').innerHTML = T.map(t => {
  if (t[0] === 'auto') return `<div class="trk aut gold-t"><div class="tag">${ico('auto')}</div>
    <div class="rwbox"><button class="g">R</button><button>W</button><button aria-label="Suspend">${ico('box')}</button><button aria-label="Lock">${ico('ulock')}</button></div>
    <div class="par"><label class="drop"><select aria-label="Parameter"><option>Lautstärke</option></select></label><output>${t[2]}</output><span>⬍</span></div></div>`;
  n++;
  return `<div class="trk ${t[1]}-t${n === 1 ? ' sel' : ''}"><div class="tag">${ico(t[4] ? 'wave' : 'keys')}<span>${n}</span></div>
    <div class="ms"><button>M</button><button>S</button></div>
    <div class="body"><span class="name">${t[0]}</span><div class="ctl">${ico('level')}<input type="range" class="rng" aria-label="Volume ${t[0]}" value="${t[3]}" style="--v:${t[3]}%"><output>${t[2]} dB</output><button class="r" aria-label="Record">${ico('dot')}</button><button aria-label="Monitor">${ico('spk')}</button></div></div></div>`;
}).join('');

/* Repeatable random numbers so every load draws the same notes. */
let seed = 7;
const rnd = () => (seed = (seed * 16807) % 2147483647) / 2147483647;

/* Note phrases, [x, y, length] in thirds of a pixel. */
const SAX = [[398,20,3],[425,20,3],[440,26,5],[445,18,8],[465,24,4],[469,16,8],[493,30,6],[500,36,8],[508,40,22],[536,36,10],[546,24,8],[556,16,8],[562,25,22],[590,25,18],[625,14,8],[634,22,22],[663,17,12],[678,30,14],[697,20,10],[706,26,16],[727,24,24],[768,28,14],[782,19,18],[806,26,16],[826,12,18],[846,18,10],[856,22,12],[870,28,24],[918,33,38],[972,6,6],[978,10,14],[1000,8,12],[1014,6,16],[1066,18,8],[1076,26,6],[1090,34,8],[1098,26,14],[1120,16,10],[1133,40,22]];
const TPT = [[345,44,5],[351,38,8],[382,34,8],[392,40,14],[425,36,3],[453,40,3],[480,44,3],[510,32,3],[560,32,18],[582,32,20],[610,30,5],[614,42,5],[625,20,26],[657,20,10],[672,20,24],[715,18,8],[722,22,8],[731,28,24],[782,30,6],[787,20,8],[800,30,8],[812,32,25],[846,20,5],[858,32,8],[870,32,26]];
const BONE = [[340,24,3],[368,20,3],[398,22,3],[425,20,3],[455,22,3],[480,20,3],[512,20,3],[532,25,24],[560,26,16],[580,26,22],[619,32,6],[625,20,28],[656,22,16],[674,19,22],[698,28,20],[722,20,8],[732,30,20],[760,20,26],[788,28,6],[802,28,6],[812,26,27],[846,27,6],[858,27,6],[870,20,26],[918,29,38],[965,24,3],[994,20,3],[1022,18,3],[1050,20,3],[1080,18,3],[1107,22,3],[1135,20,3],[1165,26,28]];

/* The tune repeats after 30 bars, then again 20 bars later. */
function expand(list) {
  const out = [];
  list.forEach(p => {
    out.push(p);
    const q = p.slice(); q[0] += 852; if (q[0] < 1745) out.push(q);
    const r = p.slice(); r[0] += 1422; if (r[0] > 1752 && r[0] < 2310) out.push(r);
    if (p[0] >= 760 && p[0] < 900) { const s = p.slice(); s[0] += 1535; out.push(s); }
  });
  return out;
}
const rect = (x, y, w, h) => `M${x.toFixed(1)} ${y.toFixed(1)}h${w.toFixed(1)}v${h.toFixed(1)}h${(-w).toFixed(1)}z`;

function midi(list, x0, jit, dense, col = '#35475a') {
  let a = '', b = '';
  const px = v => v / 3 + 3 - x0;
  list.forEach(([x, y, w]) => {
    const yy = Math.max(2, Math.min(17, (y + jit * Math.round(rnd() * 2 - 1) * 4 + jit * 3) / 3));
    a += rect(px(x), yy, w / 3, 1);
    if (w > 3) {
      b += rect(px(x), yy, .7, 20);
      if (w > 12) b += rect(px(x + w), yy, .7, 20);
      if (w > 12 && rnd() > .3) b += rect(px(x + w * rnd()), 10 + rnd() * 5, .7, 8);
    }
  });
  dense.forEach(([s, e]) => { for (let x = s; x < e; x += 4 + rnd() * 6) b += rect(px(x), 6 + rnd() * 8, .7, 20); });
  return `<path d="${b}" fill="${col}" opacity=".48"/><path d="${a}" fill="${col}" opacity=".85"/>`;
}
const DS = expand([[436,480],[1066,1128]]).map(p => [p[0], p[0] + 42]);
const DT = [[342,360],[390,405],[1195,1215],[1242,1256]];

function grid(x0, w, col) {
  let s = '';
  for (let i = 0; i < 30; i++) { const x = barX(1 + i * 4) - x0 - 1; if (x > 1 && x < w) s += rect(x, 0, .8, 30); }
  return `<path d="${s}" fill="${col}"/>`;
}
function clip(kind, x, end, label, art = '') {
  const w = end - x, c = kind === 'blue' ? '#71839699' : kind === 'white' ? 'none' : '#00000026';
  return `<div class="clip ${kind}" style="left:${Math.round(x)}px;width:${Math.round(w)}px"><svg>${grid(x, w, c)}${art}</svg><span>${label}</span></div>`;
}
/* Waveform: bars around a centre line; env gives the half height. */
function wave(x0, x1, mid, env, col, step = 1) {
  let d = rect(x0, mid - .3, x1 - x0, .7);
  for (let x = x0; x < x1; x += step) { const h = env(x); if (h > .3) d += rect(x, mid - h, step + .1, 2 * h); }
  return `<path d="${d}" fill="${col}"/>`;
}
function piano(low) {
  const base = [], add = (x, y, w) => base.push([x, y, w]);
  for (let x = 960; x < 1138; x += 28) add(x, low ? 38 : 42, 25);
  for (let i = 0; i < 6; i++) add(300 + i * 5, low ? 14 + (i % 3) * 4 : 12 + (i % 4) * 5, 4);
  add(332, 24, 26); add(366, low ? 38 : 28, 8); add(375, low ? 38 : 36, 10); add(390, low ? 37 : 32, 22);
  for (let x = 417; x < 510; x += 23) add(x, low ? 36 : 40, 18);
  for (let i = 0; i < 4; i++) add(520 + i * 6, low ? 18 + i * 3 : 22 + i * 6, 5);
  for (let x = 545; x < 615; x += 15) add(x, low ? 34 : 42, 12);
  for (let x = 625; x < 735; x += 19) add(x, low ? 28 + (x % 3) * 8 : 34, 16);
  for (let x = 740; x < 895; x += 24) add(x, low ? 26 + (x % 5) * 5 : 38, 19);
  add(902, low ? 37 : 43, 18); add(932, 42, 22);
  const all = expand(base);
  for (let x = 48; x < 280; x += 28) all.push([x, low ? 38 : 42, 25]);
  all.push([2438, low ? 26 : 42, 40], [2438, 40, 40]);
  let d = '';
  all.forEach(([x, y, w]) => {
    const X = x / 3 + 3 - START;
    if (low) { d += rect(X, y / 3, w / 3, 1); if (y < 30) d += rect(X, y / 3 + 5, w / 3, 1); }
    else { d += rect(X, y / 3, w / 3, w > 10 ? 1.6 : .8); if (w > 10) d += rect(X, y / 3 + 2.2, w / 3, 1.6); }
  });
  return `<path d="${d}" fill="#7d610c" opacity=".9"/>`;
}
const scr = x => x - 297;                       /* window x to canvas x */
const R = 844, L = [];
const SAXN = expand(SAX).concat([[285,32,44],[2438,30,40]]);
['Alto Sax 1','Alto Sax 2','Tenor Sax 1','Tenor Sax 2','Baritone Sax'].forEach((t, i) =>
  L.push(clip('blue', 95, R, t, midi(SAXN, 96, i * .5, DS.concat([[286,326]])))));
['Trumpet 1','Trumpet 2','Trumpet 3','Trumpet 4'].forEach((t, i) =>
  L.push(clip('blue', 114, R, t, midi(expand(TPT).concat(i === 1 || i === 2 ? SAX.slice(29, 33) : [], [[2438,26,40]]), 115, i * .6, DT))));
const BONEN = expand(BONE).concat([[118,30,6],[124,26,8],[150,22,4],[165,34,18],[213,20,8],[218,16,20],[240,24,26],[2438,26,40]]);
['Trombone 1','Trombone 2','Trombone 3','Trombone 4'].forEach((t, i) =>
  L.push(clip('blue', 39, R, t, midi(BONEN, 40, i * .5, [[205,268],[118,150]]))));
const solo = [[60,30,10],[75,28,20],[120,28,10],[155,20,8],[165,34,20],[212,14,6],[236,24,24],[268,24,10],[282,29,22]];
L.push(clip('teal', 20, 114, 'Tenor Sax 1', midi(solo, 21, 0, [[60,96],[118,152],[166,186],[240,308]], '#0c5554')));
L.push(clip('teal', 588, 674, 'Trumpet 2 Solo (D)', midi([[1765,46,6],[1772,40,14],[1830,34,12],[1850,24,10],[1925,10,8],[1935,20,12],[1948,14,18],[1955,38,14]], 589, 0, [[1775,1785],[1815,1875],[1900,1970]], '#0c5554')));
L.push(clip('gold', START, R, 'Piano The Grand SE 3', piano(false)));
L.push(clip('gold', START, R, 'Piano The Grand SE 3', piano(true)));

/* Guitar solo: boxed takes with one or more swells each: [x, length, height]. */
const takes = [[307,376,[[316,10,2.5],[328,20,4],[360,12,3.5]]],[544,599,[[553,12,4.5],[567,10,5],[587,9,5]]],[640,661,[[645,12,5]]],[828,884,[[838,12,4.5],[852,9,5],[871,9,5]]],[1018,1056,[[1027,12,4.5],[1041,10,5]]],[1057,1073,[[1060,10,5]]],[1074,1111,[[1075,6,5],[1081,6,5],[1090,6,4],[1097,11,5]]],[1112,1134,[[1113,16,5]]]];
L.push(clip('gold', START, R, 'Guitar Audio Solo_02', takes.map(([a, b, hits]) => {
  const o = 308;
  return `<rect x="${a - o + .5}" y="1.5" width="${b - a - 1}" height="16" fill="none" stroke="#a67c14" stroke-width=".7"/>` +
    wave(a - o + 2, b - o - 1, 10, () => 0, '#4c3a08') +
    hits.map(([h, len, amp]) => {
      const env = x => { const p = (x - h + o) / len; return Math.max(.4, amp * (p < .2 ? .6 + 2 * p : 1.25 * (1 - p)) - rnd() * 1.4); };
      const e = [];
      for (let x = 0; x <= len; x++) e.push(env(h - o + x));
      const up = e.map((v, i) => `L${h - o + i} ${(10 - v).toFixed(1)}`).join('');
      const down = e.map((v, i) => `L${h - o + i} ${(10 + v).toFixed(1)}`).reverse().join('');
      return `<path d="M${h - o} 10${up}${down}z" fill="#8a6b10" stroke="#3c2e06" stroke-width=".8"/>`;
    }).join('');
}).join('')));
L.push('');
const rh = [[317,347,1,'Guitar Aud'],[347,361,0,''],[361,369,1,''],[369,553,0,'Guitar Audio 01_01'],[553,565,1,''],[565,567,0,''],[567,574,1,''],[574,587,0,''],[587,594,1,''],[594,644,0,'Guitar Audio 01_0'],[644,654,1,''],[654,837,0,'Guitar Audio 01_01'],[837,849,1,''],[849,852,0,''],[852,858,1,''],[858,871,0,''],[871,878,1,''],[878,1027,0,'Guitar Audio 01_01'],[1027,1037,1,''],[1037,1042,0,''],[1042,1048,1,''],[1048,1060,0,''],[1060,1067,1,''],[1067,1075,0,''],[1075,1087,1,''],[1087,1096,1,''],[1096,1099,0,''],[1099,1105,1,''],[1105,1113,0,'']];
L.push(rh.map(([a, b, w, t]) => clip(w ? 'white' : 'gold', scr(a), scr(b), t,
  wave(0, b - a, 10, x => { const p = (x % 5.3) / 5.3; return p < .15 ? 1 : (1 - p) * (3.4 + rnd()); }, w ? '#b9a56a' : '#352805'))).join(''));
L.push('');
/* Bass line */
let bs = '', bv = '';
const steps = [33,28,33,28,33,38,22,18,33,30];
for (let x = 48, i = 0; x < 2430; x += 10 + rnd() * 10, i++) {
  const y = steps[Math.floor(((x - 48) % 852) / 113)] || 30;
  const w = 6 + rnd() * 9, X = x / 3 + 3 - START;
  bs += rect(X, (y + (rnd() > .85 ? -5 : 0)) / 3, w / 3, .9);
  if (rnd() > .8) bs += rect(X, (y + 10) / 3, 1.5, .9);
  if (rnd() > .82) bv += rect(X, 3, .5, 17);
}
bs += rect(806, 11, 14, 1);
L.push(clip('gold', START, R, 'E-Bass', `<path d="${bs}" fill="#74590a"/><path d="${bv}" fill="#a17b18"/>`));
/* Drums: two channels */
const dr = x => (x > 806 ? (x > 820 && x < 822 ? 3 : .2) : x < 6 ? .2 : (x % 4 < 1.5 ? 1.8 : .7) + rnd() * 1.2);
L.push(clip('orange', START, R, 'Drums Audio_10', wave(48, 833, 5, dr, '#4a1b08', .8) + wave(3, 833, 15, dr, '#4a1b08', .8)));
const hits = [486,524,562,600,694,770,808,846,883,960,998,1036,1074,1086,1092,1112,1130];
L.push(clip('orange', 95, 842, 'Tom Tom Audio_02', [5, 15].map(y => wave(y === 5 ? 54 : 2, 745, y, () => 0, '#6a2c10') +
  hits.map(h => `<path d="M${h - 396} ${y}l1-2 2 0 1 1 2 1-2 1-1 1-2 0z" fill="#6b2a0d" stroke="#3d1606" stroke-width=".6"/>`).join('')).join('')));
L.push(clip('orange', 20, 834, 'Addictive Drums', `<path d="${[94,169,236,245,254,264,274,378,453,520,538,548,710,719,728,737,752,772].map(x => rect(x, 4, .8, 2)).join('') + rect(801, 18, 9, 1)}" fill="#7a3210"/>`));

/* Background: cycle range, bar lines, lane lines, automation curves. */
let v = '', vr = '', h = '', labels = '';
for (let i = 0; barX(1 + i * 4) < canvas.clientWidth - 4; i++) {
  const x = barX(1 + i * 4) - .5;
  v += rect(x, 14, .8, 700); vr += rect(x, 1, .9, 13);
  labels += `<span style="left:${Math.round(x + 3)}px">${1 + i * 4}</span>`;
}
for (let i = 0; i < 26; i++) h += rect(0, 25.5 + i * 23, 3000, .8);
const curve = (pts, base, bottom) => {
  const line = pts.map(p => `L${p[0] - 297} ${base - p[1]}`).join('');
  return `<path d="M0 ${bottom}V${base}${line}L3000 ${base - 2}V${bottom}z" fill="#c8b27a" opacity=".25"/><path d="M0 ${base}${line}L3000 ${base - 2}" fill="none" stroke="#d8cfb0"/>`;
};
const bg = `<svg><rect x="${START}" width="${END - START}" height="14" fill="#5a5d5f"/><rect x="${START}" y="14" width="${END - START}" height="700" fill="#444547"/>
<path d="${v}" fill="#8b8c8d"/><path d="${vr}" fill="#c0c1c2"/><path d="${h}" fill="#58595b"/>
<path d="M${START} 2h5l-5 5zM${END} 2h-5l5 5z" fill="#fff"/>
${curve([[541,0],[544,2],[604,2],[607,0],[821,0],[825,2],[887,2],[890,0],[1013,0],[1016,2]], 453, 463)}
${curve([[480,0],[486,2],[596,2],[600,0],[764,0],[770,2],[880,2],[884,0],[956,0],[960,2]], 495, 509)}</svg>`;
const sum = clip('sum', START, R, '', `<path d="M0 5h840v2H0z" fill="#d6bd52"/><path d="M28 3h76v1h-76zM578 3h86v1h-86z" fill="#5f9aa4"/>`);
canvas.innerHTML = bg + `<div class="ruler">${labels}</div><div class="lane first">${sum}</div>` +
  L.map(l => `<div class="lane">${l}</div>`).join('');
```
